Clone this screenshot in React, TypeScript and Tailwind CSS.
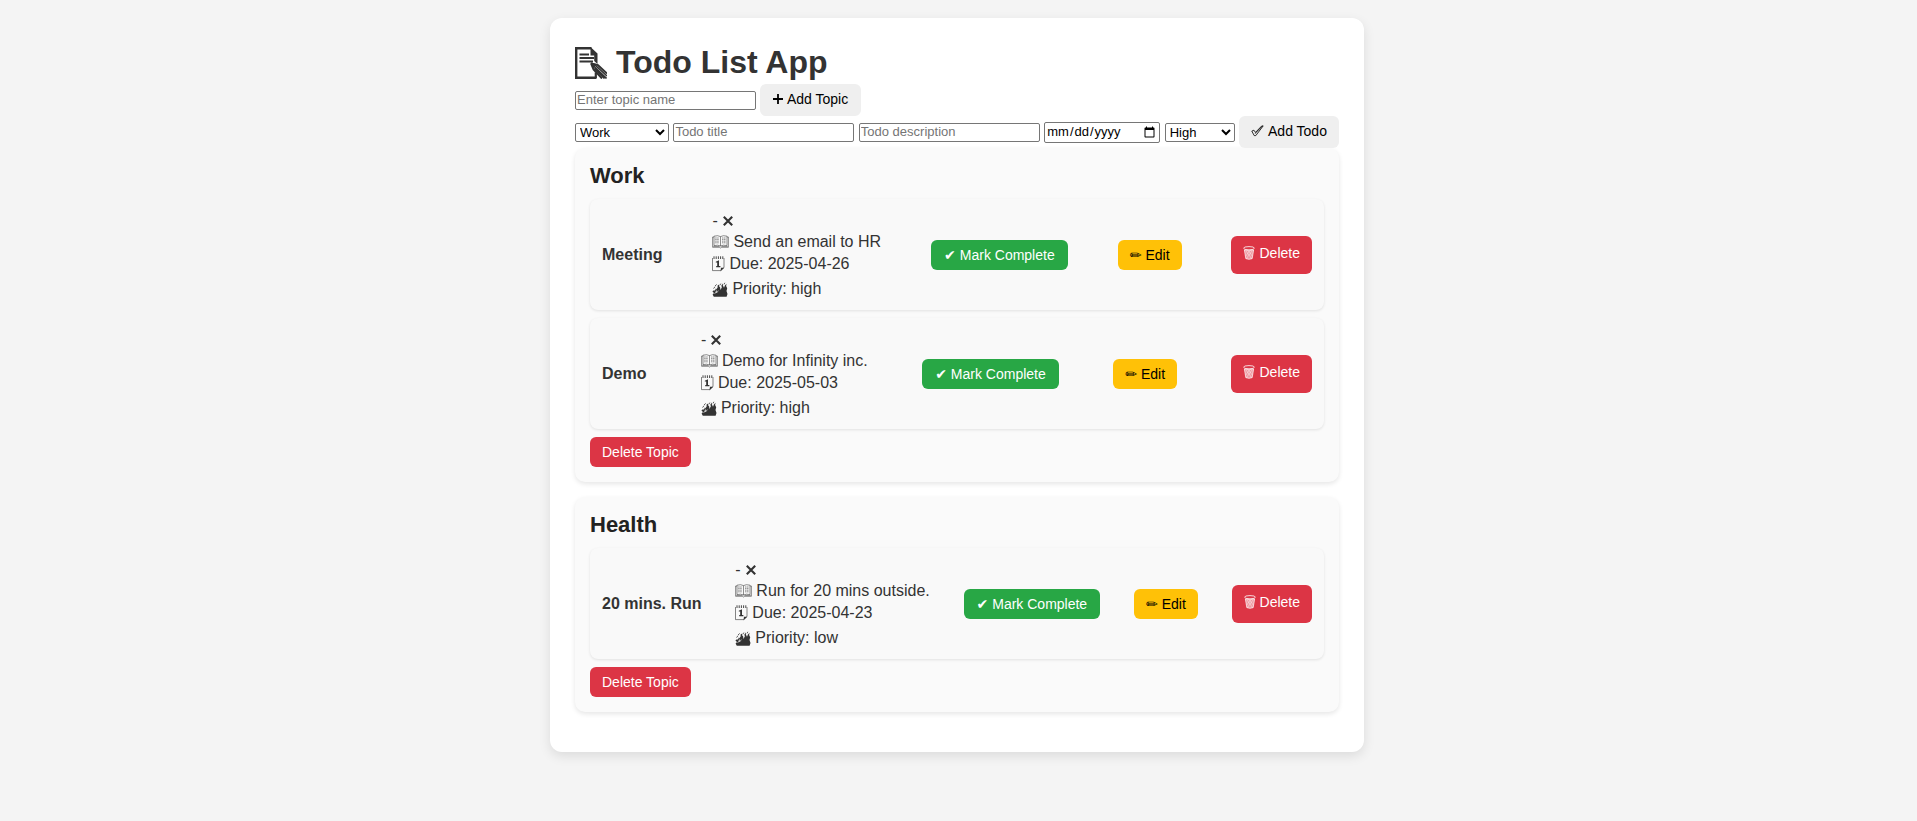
import React from "react";

type Todo = { title: string; description: string; due: string; priority: string };
type Topic = { name: string; todos: Todo[] };

const topics: Topic[] = [
  {
    name: "Work",
    todos: [
      { title: "Meeting", description: "Send an email to HR", due: "2025-04-26", priority: "high" },
      { title: "Demo", description: "Demo for Infinity inc.", due: "2025-05-03", priority: "high" },
    ],
  },
  {
    name: "Health",
    todos: [{ title: "20 mins. Run", description: "Run for 20 mins outside.", due: "2025-04-23", priority: "low" }],
  },
];

function MemoIcon() {
  return (
    <svg width="32" height="32" viewBox="0 0 32 32" fill="none" stroke="currentColor" aria-hidden="true">
      <path d="M21.5 30.8H1.2V1.2H16.5" strokeWidth="2.4" />
      <path d="M15.5 0L22.5 6.5V17L19.2 14V8.5H15.5Z" fill="currentColor" stroke="none" />
      <path d="M4.5 7.5H14M4.5 11H19M4.5 14.5H18" strokeWidth="2.2" />
      <path d="M16 16.5L23 18.2L32 26.5M16 16.5L18.5 22.5L27 31.5" strokeWidth="1.9" />
      <path d="M17 17.5L31.5 31.5M20 18L32 29M19 21.5L29.5 31.5" strokeWidth="1.6" />
      <path d="M16 16L21 17.5L18 21Z" fill="currentColor" />
      <path d="M20.8 25.5V31" strokeWidth="2.2" />
    </svg>
  );
}

function PlusIcon() {
  return (
    <svg width="10" height="10" viewBox="0 0 10 10" stroke="currentColor" strokeWidth="1.8" aria-hidden="true">
      <path d="M5 0V10M0 5H10" />
    </svg>
  );
}

function CheckIcon() {
  return (
    <svg width="13" height="12" viewBox="0 0 13 12" fill="none" stroke="currentColor" strokeWidth="0.8" aria-hidden="true">
      <path d="M0.8 6.1L2.9 5.2L4.5 7.4L10.8 0.9L12.2 0.9L4.8 10.6H3.2Z" />
      <path d="M4 8.6L11.3 1.2" strokeWidth="1.1" strokeOpacity="0.55" />
    </svg>
  );
}

function CrossIcon() {
  return (
    <svg width="10" height="10" viewBox="0 0 10 10" stroke="currentColor" strokeWidth="2.1" aria-hidden="true">
      <path d="M0.8 0.8L9.2 9.2M9.2 0.8L0.8 9.2" />
    </svg>
  );
}

function BookIcon() {
  return (
    <svg width="17" height="14" viewBox="0 0 17 14" fill="none" stroke="currentColor" strokeWidth="0.55" aria-hidden="true">
      <path d="M2 1.2Q6 0 8.5 1.6Q11 0 15 1.2V10.6Q11 9.6 8.5 11Q6 9.6 2 10.6ZM8.5 1.6V11" />
      <path d="M2 2H0.6V12.3H7.3L8.5 13L9.7 12.3H16.4V2H15M1.3 11.4H7.5M9.5 11.4H15.7" />
      <path d="M3.2 3H7M3.2 4.6H7M3.2 6.2H7M3.2 7.8H7M10 3H13.8M10 4.6H13.8M10 6.2H13.8M10 7.8H13.8" strokeDasharray="1.5 .5" />
    </svg>
  );
}

function CalendarIcon() {
  return (
    <svg width="13" height="16" viewBox="0 0 13 16" fill="none" stroke="currentColor" aria-hidden="true">
      <path d="M0.5 2V14.6H8.8L12 11.5V2" strokeWidth="0.6" />
      <path d="M2 0.3V3M4.2 0.3V3M6.4 0.3V3M8.6 0.3V3M10.8 0.3V3" strokeWidth="0.9" />
      <path d="M3.8 5.8L7 4.2V10H8.4V11.2H4.2V10H5.2V6.4H3.8Z" fill="currentColor" stroke="none" />
      <path d="M8.4 15.2L9 11.8H12.3Z" fill="currentColor" stroke="none" />
    </svg>
  );
}

function FireIcon() {
  return (
    <svg width="16" height="15" viewBox="0 0 16 15" fill="currentColor" aria-hidden="true">
      <path d="M1.8 14.8L0.6 12.6L2 11L0.4 9.6L2.2 8L2.8 9L4 6.2L4.2 7.6L5.6 5.4L5.6 3.4L7.2 2.4L6.9 4L8.2 5.6L8.4 8L9.8 5.4L9.4 3.4L10.8 1.4L10.9 3.6L12 5.8L12.9 3.4L14.6 1.8L14.1 4L15.2 6.2L14.5 9L15.5 12L14.6 14.8Z" />
      <path d="M1.6 6.6L3 4.6M3.1 4L4.6 2.4M7.8 3.4L8.8 1.6M12 2.4L12.8 0.8" fill="none" stroke="currentColor" strokeWidth="0.8" />
      <path d="M2.6 12L4.6 8.6L4.5 11L6.4 8.6" fill="none" stroke="#f9f9f9" strokeWidth="0.6" />
    </svg>
  );
}

function TrashIcon() {
  return (
    <svg width="12" height="14" viewBox="0 0 12 14" fill="none" stroke="currentColor" aria-hidden="true">
      <ellipse cx="6" cy="2.2" rx="5.4" ry="1.6" strokeWidth="0.8" />
      <path d="M1.4 4L2.8 12.6Q6 14 9.2 12.6L10.6 4Q6 5.4 1.4 4Z" fill="currentColor" fillOpacity="0.5" strokeWidth="0.7" />
      <path d="M3 5L8.6 12.6M5.6 5L9.2 10M9 5L3.4 12.6M6.4 5L2.8 10" strokeWidth="0.4" />
    </svg>
  );
}

const field = "h-[19px] w-[181px] rounded-[2px] border border-[#767676] bg-white px-px text-[13px] placeholder:text-[#757575]";
const select = "h-[19px] rounded-[2px] border border-[#767676] bg-white text-[13px] text-black";
const button = "flex cursor-pointer items-center gap-1 whitespace-nowrap rounded-md text-sm leading-4";

function TodoItem({ todo }: { todo: Todo }) {
  return (
    <li className="flex items-center justify-between rounded-lg bg-[#f9f9f9] p-3 text-[#333] shadow-[0_1px_3px_rgba(0,0,0,0.1)]">
      <strong>{todo.title}</strong>
      <div className="pt-px leading-[18px]">
        <div className="flex items-center gap-[5px]">
          - <CrossIcon />
        </div>
        <div className="mt-[3px] flex items-center gap-1">
          <BookIcon /> {todo.description}
        </div>
        <div className="mt-1 flex items-center gap-1">
          <CalendarIcon /> Due: {todo.due}
        </div>
        <div className="mt-[7px] flex items-center gap-1">
          <FireIcon /> Priority: {todo.priority}
        </div>
      </div>
      <button className={`${button} bg-[#28a745] px-[13px] py-[7px] text-white`}>
        <span className="font-['DejaVu_Sans',sans-serif]">✔</span> Mark Complete
      </button>
      <button className={`${button} bg-[#ffc107] px-3 py-[7px] text-black`}>
        <span className="font-['DejaVu_Sans',sans-serif]">✏</span> Edit
      </button>
      <button className={`${button} bg-[#dc3545] px-3 pt-[9px] pb-[13px] text-white`}>
        <TrashIcon /> Delete
      </button>
    </li>
  );
}

export default function App() {
  return (
    <div className="min-h-screen bg-[#f4f4f4] pt-[18px] pr-[19px] pl-4 font-['Liberation_Sans',Arial,sans-serif]">
      <main className="mx-auto max-w-[814px] rounded-xl bg-white p-[25px] shadow-[0_4px_12px_rgba(0,0,0,0.1)]">
        <h1 className="flex items-center gap-[9px] pb-[2px] text-[32px] leading-[39px] font-bold text-[#333]">
          <MemoIcon /> Todo List App
        </h1>
        <form className="flex items-center gap-1" onSubmit={(e) => e.preventDefault()}>
          <input className={field} aria-label="Topic name" placeholder="Enter topic name" />
          <button className={`${button} bg-[#efefef] px-[13px] pt-[7px] pb-[9px] text-black`}>
            <PlusIcon /> Add Topic
          </button>
        </form>
        <form className="flex flex-wrap items-center justify-between gap-1" onSubmit={(e) => e.preventDefault()}>
          <select aria-label="Topic" className={`${select} w-[94px]`}>
            <option>Work</option>
            <option>Health</option>
          </select>
          <input className={field} aria-label="Todo title" placeholder="Todo title" />
          <input className={field} aria-label="Todo description" placeholder="Todo description" />
          <input type="date" aria-label="Due date" className="h-[21px] w-[116px] rounded-[2px] border border-[#767676] bg-white px-px text-[13px] text-black" />
          <select aria-label="Priority" className={`${select} w-[70px]`}>
            <option>High</option>
            <option>Medium</option>
            <option>Low</option>
          </select>
          <button className={`${button} bg-[#efefef] px-3 pt-[7px] pb-[9px] text-black`}>
            <CheckIcon /> Add Todo
          </button>
        </form>
        {topics.map((topic) => (
          <section key={topic.name} className="mb-[15px] rounded-[10px] bg-[#fafafa] p-[15px] shadow-[0_2px_5px_rgba(0,0,0,0.1)]">
            <h2 className="mb-[10px] text-[22px] leading-[26px] font-bold text-[#222]">{topic.name}</h2>
            <ul className="mb-2 flex flex-col gap-2">
              {topic.todos.map((todo) => (
                <TodoItem key={todo.title} todo={todo} />
              ))}
            </ul>
            <button className={`${button} bg-[#dc3545] px-3 py-[7px] text-white`}>Delete Topic</button>
          </section>
        ))}
      </main>
    </div>
  );
}
